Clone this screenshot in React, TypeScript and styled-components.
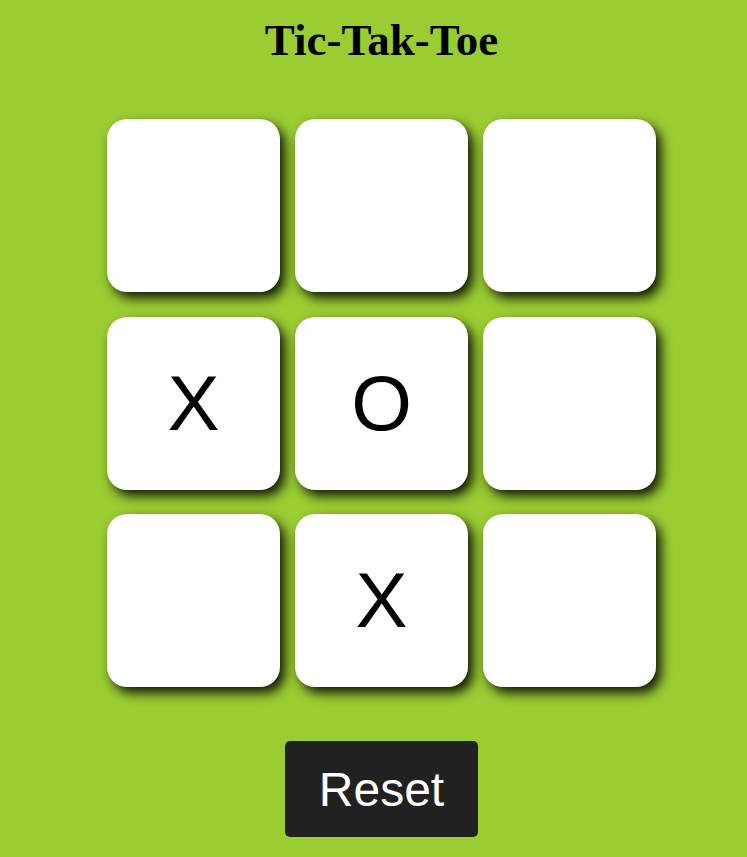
import React, { useState } from "react";
import styled, { createGlobalStyle } from "styled-components";

const GlobalStyle = createGlobalStyle`
  html, body {
    margin: 0;
    padding: 0;
    background: #9acd32;
  }
`;

const Page = styled.div`
  min-height: 857px;
  padding-left: 16px;
  box-sizing: border-box;
  display: flex;
  flex-direction: column;
  align-items: center;
  background: #9acd32;
`;

const Title = styled.h1`
  margin: 14px 0 0;
  font-family: "Liberation Serif", "Times New Roman", serif;
  font-weight: bold;
  font-size: 45px;
  line-height: 52px;
  color: #000;
`;

const Board = styled.div`
  margin-top: 53px;
  display: grid;
  grid-template-columns: repeat(3, 173px);
  grid-auto-rows: 173px;
  column-gap: 15px;
  row-gap: 24.5px;
`;

const Cell = styled.button`
  width: 173px;
  height: 173px;
  border: none;
  padding: 0;
  background: #fff;
  border-radius: 20px;
  box-shadow: 5px 6px 12px rgba(0, 0, 0, 0.9);
  display: flex;
  align-items: center;
  justify-content: center;
  font-family: "Liberation Sans", Arial, sans-serif;
  font-size: 78px;
  color: #000;
  cursor: pointer;
`;

const ResetButton = styled.button`
  margin-top: 54px;
  width: 193px;
  height: 96px;
  border: none;
  border-radius: 5px;
  background: #212121;
  color: #fff;
  font-family: "Liberation Sans", Arial, sans-serif;
  font-size: 48px;
  cursor: pointer;
`;

const initial = ["", "", "", "X", "O", "", "", "X", ""];

export default function App() {
  const [cells, setCells] = useState<string[]>(initial);
  return (
    <>
      <GlobalStyle />
      <Page>
        <Title>Tic-Tak-Toe</Title>
        <Board>
          {cells.map((c, i) => (
            <Cell key={i}>{c}</Cell>
          ))}
        </Board>
        <ResetButton onClick={() => setCells(Array(9).fill(""))}>Reset</ResetButton>
      </Page>
    </>
  );
}
